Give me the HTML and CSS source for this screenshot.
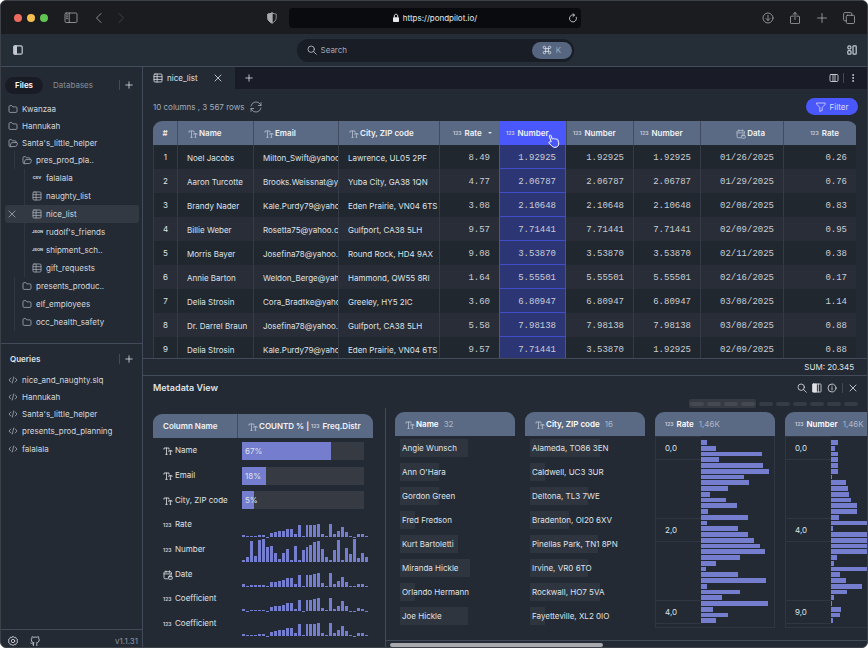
FILE: index.html
```html
<!DOCTYPE html>
<html lang="en">
<head>
  <meta charset="UTF-8" />
  <meta name="viewport" content="width=device-width, initial-scale=1" />
  <title>PondPilot</title>
  <link rel="stylesheet" href="styles.css">
</head>
<body>
  <svg class="sprite" aria-hidden="true">
    <symbol id="i-folder" viewBox="0 0 10 10"><path d="M1 2.600c0-.6.4-1 1-1h1.800l1.100 1.300H8c.6 0 1 .4 1 1v3.500c0 .6-.4 1-1 1H2c-.6 0-1-.4-1-1z"/></symbol>
    <symbol id="i-folder-open" viewBox="0 0 10 10"><path d="M2 8.400c-.6 0-1-.4-1-1V2.600c0-.6.4-1 1-1h1.500l1 1.200h2.600c.6 0 1 .4 1 1v.7M2 8.400l1.200-3.300c.1-.3.3-.5.7-.5h4.900c.4 0 .7.3.6.7l-.7 2.400c-.1.4-.5.7-.9.7z"/></symbol>
    <symbol id="i-table" viewBox="0 0 10 10"><rect x="1" y="1" width="8" height="8" rx="1"/><path d="M1 3.700h8M1 6.400h8M4.100 1v8"/></symbol>
    <symbol id="i-close" viewBox="0 0 10 10"><path d="M2 2l6 6M8 2l-6 6"/></symbol>
    <symbol id="i-plus" viewBox="0 0 10 10"><path d="M5 1.800v6.400M1.800 5h6.400"/></symbol>
    <symbol id="i-code" viewBox="0 0 10 10"><path d="M2.800 3L1 5l1.800 2M7.200 3L9 5 7.200 7M5.700 2L4.300 8"/></symbol>
    <symbol id="i-search" viewBox="0 0 10 10"><circle cx="4.200" cy="4.200" r="3.200"/><path d="M6.600 6.600L9.300 9.300"/></symbol>
    <symbol id="i-text" viewBox="0 0 10 10"><path d="M1 3.200V2h5v1.200M3.500 2v6.300M2.700 8.300h1.600M5.800 5.500v-.8H9v.8M7.400 4.700v3.600M6.900 8.300h1"/></symbol>
    <symbol id="i-date" viewBox="0 0 10 10"><path d="M4.600 8.800H2c-.6 0-1-.4-1-1V2.700c0-.6.4-1 1-1h5.400c.6 0 1 .4 1 1v1.500M1 3.900h7.400M3 .8v1.600M6.400.8v1.600"/><rect x="5.600" y="6.600" width="3.600" height="2.600" rx=".4"/><path d="M6.400 6.600v-.7c0-1.200 2-1.200 2 0v.7"/></symbol>
    <symbol id="i-columns" viewBox="0 0 10 10"><rect x="1" y="1.500" width="8" height="7" rx="1"/><path d="M4 1.500v7M6 1.500v7"/></symbol>
  </svg>

  <div class="window">
    <header class="chrome">
      <div class="chrome-side">
        <span class="dot red"></span><span class="dot yellow"></span><span class="dot green"></span>
        <button class="icon-btn chrome-panel" aria-label="Sidebar"><svg class="icon wide" viewBox="0 0 14 12"><rect x="1" y="1" width="12" height="9.500" rx="1.200"/><path d="M5.200 1v9.500M2.400 3h1.400M2.400 4.800h1.400M2.400 6.600h1.400"/></svg></button>
        <button class="icon-btn chrome-back" aria-label="Back"><svg class="icon lg" viewBox="0 0 12 12"><path d="M8 1.500L3.500 6 8 10.500"/></svg></button>
        <button class="icon-btn chrome-forward" aria-label="Forward"><svg class="icon lg" viewBox="0 0 12 12"><path d="M4 1.500L8.500 6 4 10.500"/></svg></button>
        <svg class="icon lg shield" viewBox="0 0 12 12"><path d="M6 1C4.500 1.700 3 2 1.800 2v4.200c0 2.200 2 3.900 4.200 4.900 2.200-1 4.200-2.700 4.200-4.900V2C9 2 7.500 1.700 6 1z"/><path class="fill" d="M6 1C4.500 1.700 3 2 1.800 2v4.200c0 2.200 2 3.900 4.200 4.900z"/></svg>
      </div>
      <div class="address">
        <svg class="lock" viewBox="0 0 8 10"><rect x="1" y="4.300" width="6" height="4.700" rx=".8"/><path d="M2.300 4.500V3c0-2.300 3.400-2.300 3.400 0v1.500"/></svg>
        <span>https://pondpilot.io/</span>
        <button class="icon-btn reload" aria-label="Reload"><svg class="icon" viewBox="0 0 10 10"><path d="M8.300 4.200a3.500 3.500 0 1 1-1.900-2L5.200.7M6.500 2.200L5 3.500"/></svg></button>
      </div>
      <div class="chrome-side chrome-tools">
        <button class="icon-btn" aria-label="Downloads"><svg class="icon lg" viewBox="0 0 12 12"><circle cx="6" cy="6" r="5"/><path d="M6 3.300v5M4 6.500l2 2 2-2"/></svg></button>
        <button class="icon-btn" aria-label="Share"><svg class="icon lg" viewBox="0 0 12 12"><path d="M4.300 4.200H2.200c-.4 0-.7.3-.7.7v6c0 .4.3.7.7.7h7.600c.4 0 .7-.3.7-.7v-6c0-.4-.3-.7-.7-.7H7.700M6 7.600V.5M3.900 2.500L6 .5l2.100 2"/></svg></button>
        <button class="icon-btn" aria-label="New tab"><svg class="icon lg" viewBox="0 0 12 12"><path d="M6 1.500v9M1.500 6h9"/></svg></button>
        <button class="icon-btn" aria-label="Tabs"><svg class="icon lg" viewBox="0 0 12 12"><rect x="3.300" y="3.300" width="8.200" height="8.200" rx="1.200"/><path d="M3.300 8.800H1.700c-.6 0-1.100-.5-1.100-1.100v-6c0-.6.5-1.100 1.100-1.100h6c.6 0 1.100.5 1.100 1.100v1.600"/></svg></button>
      </div>
    </header>

    <div class="app-bar">
      <button class="icon-btn" aria-label="Toggle sidebar"><svg class="icon bold" viewBox="0 0 10 10"><rect x=".8" y=".8" width="8.400" height="8.400" rx="1.200"/><path class="fill" d="M1.200 1.200h2.200v7.600H1.200z"/></svg></button>
      <div class="search">
        <svg class="icon"><use href="#i-search"/></svg>
        <input type="search" placeholder="Search" aria-label="Search">
        <kbd><svg class="icon" viewBox="0 0 10 10"><path d="M3.600 3.600H2.400a1.200 1.200 0 1 1 1.200-1.200v5.200a1.200 1.200 0 1 1-1.200-1.200h5.200a1.200 1.200 0 1 1-1.200 1.200V2.400a1.200 1.200 0 1 1 1.200 1.200z"/></svg> K</kbd>
      </div>
      <button class="icon-btn" aria-label="Layout"><svg class="icon bold" viewBox="0 0 10 10"><circle cx="2.400" cy="2.400" r="1.600"/><rect x=".8" y="5.600" width="3.200" height="3.600" rx="1"/><rect x="6" y=".8" width="3.200" height="8.400" rx=".8"/></svg></button>
    </div>

    <div class="body">
      <aside class="sidebar">
        <section class="files">
          <div class="side-head">
            <button class="pill active">Files</button>
            <button class="pill">Databases</button>
            <span class="sep"></span>
            <button class="icon-btn" aria-label="Add file"><svg class="icon"><use href="#i-plus"/></svg></button>
          </div>
          <ul class="tree">
            <li class="l0"><svg class="icon"><use href="#i-folder"/></svg>Kwanzaa</li>
            <li class="l0"><svg class="icon"><use href="#i-folder"/></svg>Hannukah</li>
            <li class="l0"><svg class="icon"><use href="#i-folder-open"/></svg>Santa's_little_helper</li>
            <li class="l1"><svg class="icon"><use href="#i-folder-open"/></svg>pres_prod_pla..</li>
            <li class="l2"><span class="badge">CSV</span>falalala</li>
            <li class="l2"><svg class="icon"><use href="#i-table"/></svg>naughty_list</li>
            <li class="l2 selected"><button class="icon-btn close" aria-label="Close nice_list"><svg class="icon"><use href="#i-close"/></svg></button><svg class="icon"><use href="#i-table"/></svg>nice_list</li>
            <li class="l2"><span class="badge">JSON</span>rudolf's_friends</li>
            <li class="l2"><span class="badge">JSON</span>shipment_sch..</li>
            <li class="l2"><svg class="icon"><use href="#i-table"/></svg>gift_requests</li>
            <li class="l1"><svg class="icon"><use href="#i-folder"/></svg>presents_produc..</li>
            <li class="l1"><svg class="icon"><use href="#i-folder"/></svg>elf_employees</li>
            <li class="l1"><svg class="icon"><use href="#i-folder"/></svg>occ_health_safety</li>
          </ul>
        </section>
        <section class="queries">
          <div class="side-head">
            <h2>Queries</h2>
            <span class="sep"></span>
            <button class="icon-btn" aria-label="Add query"><svg class="icon"><use href="#i-plus"/></svg></button>
          </div>
          <ul class="tree">
            <li class="l0"><svg class="icon"><use href="#i-code"/></svg>nice_and_naughty.slq</li>
            <li class="l0"><svg class="icon"><use href="#i-code"/></svg>Hannukah</li>
            <li class="l0"><svg class="icon"><use href="#i-code"/></svg>Santa's_little_helper</li>
            <li><svg class="icon"><use href="#i-code"/></svg>presents_prod_planning</li>
            <li><svg class="icon"><use href="#i-code"/></svg>falalala</li>
          </ul>
        </section>
        <footer class="side-foot">
          <button class="icon-btn" aria-label="Settings"><svg class="icon" viewBox="0 0 10 10"><path d="M5 .5l1.200.9 1.500-.1.500 1.400 1.300.8-.4 1.500.4 1.500-1.300.8-.5 1.400-1.500-.1L5 9.500l-1.200-.9-1.500.1-.5-1.400L.5 6.500.9 5 .5 3.500l1.300-.8.5-1.400 1.500.1z"/><circle cx="5" cy="5" r="1.700"/></svg></button>
          <button class="icon-btn" aria-label="GitHub"><svg class="icon" viewBox="0 0 10 10"><path d="M3.400 9.600V7.800C1.800 8.200 1.900 7 .8 6.900M6.800 9.600V7.700c0-.5-.1-.8-.3-1C8 6.500 9.200 5.800 9.200 3.800c0-.6-.2-1.100-.6-1.500.2-.5.1-1.100-.1-1.600 0 0-.6-.1-1.700.6a6 6 0 0 0-3.100 0C2.600.6 2 .7 2 .7c-.2.5-.2 1.100-.1 1.600-.4.4-.6.900-.6 1.500 0 2 1.200 2.700 2.700 2.900-.3.300-.5.700-.5 1.100"/></svg></button>
          <span class="version">v1.1.31</span>
        </footer>
      </aside>

      <main class="content">
        <nav class="tabs">
          <div class="tab">
            <svg class="icon"><use href="#i-table"/></svg>
            <span>nice_list</span>
            <button class="icon-btn" aria-label="Close tab"><svg class="icon"><use href="#i-close"/></svg></button>
          </div>
          <button class="icon-btn add-tab" aria-label="New tab"><svg class="icon"><use href="#i-plus"/></svg></button>
          <div class="tab-tools">
            <button class="icon-btn" aria-label="Columns"><svg class="icon"><use href="#i-columns"/></svg></button>
            <span class="sep"></span>
            <button class="icon-btn" aria-label="More"><svg class="icon" viewBox="0 0 10 10"><circle class="fill" cx="5" cy="2" r=".4"/><circle class="fill" cx="5" cy="5" r=".4"/><circle class="fill" cx="5" cy="8" r=".4"/></svg></button>
          </div>
        </nav>

        <div class="toolbar">
          <span>10 columns , 3 567 rows</span>
          <button class="icon-btn" aria-label="Refresh"><svg class="icon lg" viewBox="0 0 12 12"><path d="M1 5a5.100 5.100 0 0 1 9.300-1.700L11 4.500M11 1.700v2.800H8.300M11 7a5.100 5.100 0 0 1-9.300 1.700L1 7.500M1 10.300V7.500h2.700"/></svg></button>
          <button class="filter"><svg class="icon" viewBox="0 0 10 10"><path d="M.8 1h8.400v1.300L6.200 5.500v3L3.800 9.400V5.500L.8 2.300z"/></svg>Filter</button>
        </div>

        <div class="grid-scroll">
          <table class="grid">
            <colgroup>
              <col class="w-idx"><col class="w-name"><col class="w-email"><col class="w-city"><col class="w-rate">
              <col class="w-num"><col class="w-num"><col class="w-num"><col class="w-date"><col class="w-last">
            </colgroup>
            <thead>
              <tr>
                <th class="idx">#</th>
                <th><svg class="icon"><use href="#i-text"/></svg>Name</th>
                <th><svg class="icon"><use href="#i-text"/></svg>Email</th>
                <th><svg class="icon"><use href="#i-text"/></svg>City, ZIP code</th>
                <th class="rate"><span class="n">123</span>Rate<span class="sort"></span></th>
                <th class="num picked"><span class="n">123</span>Number
                  <svg class="pointer" viewBox="0 0 12 14"><path d="M3.200 7.800L1.300 2.200c-.3-1.100 1.300-1.700 1.700-.6l1.300 3.600c.5-.9 1.600-.8 1.900 0 .5-.7 1.600-.6 1.900.2.600-.6 1.600-.3 1.700.5l.8 2.600c.5 2.200-.4 4.200-2.500 4.700-1.800.5-3.300-.1-4.300-1.300L1 9.200c-.6-.9.5-1.900 1.300-1.300z"/></svg>
                </th>
                <th class="num"><span class="n">123</span>Number</th>
                <th class="num"><span class="n">123</span>Number</th>
                <th class="right"><svg class="icon"><use href="#i-date"/></svg>Data</th>
                <th class="right"><span class="n">123</span>Rate</th>
              </tr>
            </thead>
            <tbody id="rows"></tbody>
          </table>
        </div>
        <div class="sum">SUM: 20.345</div>

        <section class="meta">
          <div class="meta-head">
            <h2>Metadata View</h2>
            <button class="icon-btn" aria-label="Search columns"><svg class="icon"><use href="#i-search"/></svg></button>
            <button class="icon-btn" aria-label="Layout"><svg class="icon" viewBox="0 0 10 10"><rect x="1" y="1" width="8" height="8" rx=".6"/><path class="fill" d="M1 1h3.600v8H1z"/><path d="M6.400 1v8"/></svg></button>
            <button class="icon-btn" aria-label="Info"><svg class="icon" viewBox="0 0 10 10"><circle cx="5" cy="5" r="4"/><path d="M5 4.500v2.500M5 2.800v.3"/></svg></button>
            <span class="sep"></span>
            <button class="icon-btn" aria-label="Close metadata"><svg class="icon"><use href="#i-close"/></svg></button>
          </div>
          <div class="minimap"><div class="minimap-view"><i></i><i></i><i></i><i></i></div><i></i><i></i><i></i><i></i><i></i><i></i></div>

          <div class="meta-body">
            <div class="summary-pane">
              <table class="summary">
                <thead>
                  <tr>
                    <th>Column Name</th>
                    <th><svg class="icon"><use href="#i-text"/></svg>COUNTD % | <span class="n">123</span>Freq.Distr</th>
                  </tr>
                </thead>
                <tbody id="summary"></tbody>
              </table>
            </div>
            <div class="cards-pane">
              <div class="cards">
                <section class="card">
                  <h3><svg class="icon"><use href="#i-text"/></svg>Name <small>32</small></h3>
                  <ul class="values" id="names"></ul>
                </section>
                <section class="card">
                  <h3><svg class="icon"><use href="#i-text"/></svg>City, ZIP code <small>16</small></h3>
                  <ul class="values" id="cities"></ul>
                </section>
                <section class="card">
                  <h3><span class="n">123</span>Rate <small>1,46K</small></h3>
                  <div class="histo">
                    <div class="scale"><span>0,0</span><span>2,0</span><span>4,0</span></div>
                    <div class="bars" id="rate-bars"></div>
                  </div>
                </section>
                <section class="card">
                  <h3><span class="n">123</span>Number <small>1,46K</small></h3>
                  <div class="histo">
                    <div class="scale"><span>0,0</span><span>4,0</span><span>9,0</span></div>
                    <div class="bars" id="number-bars"></div>
                  </div>
                </section>
              </div>
              <div class="scrollbar"><span></span></div>
            </div>
          </div>
        </section>
      </main>
    </div>
  </div>
  <script src="script.js"></script>
</body>
</html>
```
FILE: styles.css
```css
* {
  box-sizing: border-box;
}

body {
  margin: 0;
  height: 100vh;
  overflow: hidden;
  background: #fff;
  color: #dfe2e7;
  font-family: Inter, 'Liberation Sans', sans-serif;
  font-size: 8px;
  line-height: 12px;
}

ul, h2, h3 {
  margin: 0;
  padding: 0;
  list-style: none;
}

button, input {
  font: inherit;
  color: inherit;
  border: 0;
  padding: 0;
  background: none;
}

.sprite {
  position: absolute;
  width: 0;
  height: 0;
}

.icon {
  width: 10px;
  height: 10px;
  flex: none;
  fill: none;
  stroke: currentColor;
  stroke-width: 0.8;
  stroke-linecap: round;
  stroke-linejoin: round;
}

.icon .fill {
  fill: currentColor;
}

.icon.lg {
  width: 12px;
  height: 12px;
}

.icon.wide {
  width: 14px;
  height: 12px;
}

.icon.bold {
  stroke-width: 1.2;
}

.icon-btn {
  display: flex;
  cursor: pointer;
}

.sep {
  width: 1px;
  height: 10px;
  background: #424a56;
}

.n {
  font-size: 5px;
  font-weight: 700;
  color: #c3c8d2;
}

.window {
  display: flex;
  flex-direction: column;
  height: 100vh;
  border: 1px solid #3c4148;
  border-radius: 6px;
  background: #232a34;
  overflow: hidden;
}

/* browser bar */
.chrome {
  display: flex;
  align-items: center;
  flex: none;
  height: 33px;
  padding: 0 12px 0 13px;
  background: #1b1c1f;
  color: #a9abaf;
}

.chrome-side {
  display: flex;
  flex: 1;
  align-items: center;
}

.dot {
  width: 8px;
  height: 8px;
  margin-right: 5px;
  border-radius: 50%;
}

.red { background: #ed6a5e; }
.yellow { background: #f4bf4f; }
.green { background: #61c554; }

.chrome-panel {
  margin-left: 11px;
}

.chrome-back {
  margin-left: 15px;
}

.chrome-forward {
  margin-left: 10px;
  color: #4c4e52;
}

.shield {
  margin: 0 11px 0 auto;
}

.chrome-tools {
  justify-content: flex-end;
  gap: 15px;
}

.address {
  display: flex;
  flex: 0 1 292px;
  align-items: center;
  justify-content: center;
  position: relative;
  height: 20px;
  border-radius: 4px;
  background: #090b0e;
  color: #e8e9eb;
}

.lock {
  width: 8px;
  height: 10px;
  margin-right: 3px;
  fill: currentColor;
}

.lock path {
  fill: none;
  stroke: currentColor;
}

.reload {
  position: absolute;
  right: 3px;
}

/* app bar */
.app-bar {
  display: flex;
  align-items: center;
  justify-content: space-between;
  flex: none;
  height: 33px;
  padding: 0 10px 0 12px;
  border-bottom: 1px solid #414e5d;
  background: #252d37;
  color: #c3cbd6;
}

.search {
  display: flex;
  align-items: center;
  gap: 4px;
  width: 277px;
  height: 23px;
  padding: 0 2px 0 10px;
  border-radius: 12px;
  background: #191d26;
}

.search input {
  flex: 1;
  min-width: 0;
  outline: none;
}

.search input::placeholder {
  color: #a3a9b3;
}

.search kbd {
  display: flex;
  align-items: center;
  justify-content: center;
  gap: 4px;
  width: 40px;
  height: 17px;
  border-radius: 9px;
  background: #576680;
  color: #9ca8bb;
  font-family: inherit;
}

.search kbd .icon {
  color: #dfe4ec;
}

.body {
  display: flex;
  flex: 1;
  min-height: 0;
}

/* sidebar */
.sidebar {
  display: flex;
  flex-direction: column;
  flex: none;
  width: 142px;
  border-right: 1px solid #414b59;
}

.files {
  height: 277px;
  padding-top: 9px;
  border-bottom: 1px solid #414b59;
}

.side-head {
  display: flex;
  align-items: center;
  height: 18px;
  padding: 0 8px 0 4px;
}

.side-head h2 {
  padding-left: 5px;
  font-size: 8px;
  font-weight: 600;
}

.side-head .sep {
  margin: 0 4px 0 auto;
}

.pill {
  height: 17px;
  padding: 0 10px;
  border-radius: 9px;
  color: #858d99;
}

.pill.active {
  background: #191c24;
  color: #fff;
  font-weight: 600;
}

.tree {
  padding: 6px 3px 0 4px;
}

.tree li {
  display: flex;
  align-items: center;
  gap: 4px;
  height: 18px;
  border-radius: 3px;
  padding-left: 3px;
  color: #d3d7dd;
}

.tree .icon {
  color: #a4abb5;
}

.tree .l0 {
  height: 17px;
}

.l1::before,
.l2::before {
  content: '';
  align-self: stretch;
  width: 1px;
  margin-left: 6px;
  margin-right: 3px;
  background: #2f3640;
}

.tree .l2::before {
  margin-left: 16px;
  margin-right: 3px;
}

.tree .selected {
  background: #333942;
}

.tree .selected::before {
  display: none;
}

.selected .close {
  margin-left: -1px;
  margin-right: 11px;
}

.badge {
  width: 10px;
  font-size: 4px;
  font-weight: 800;
  text-align: center;
  color: #c3c8d0;
}

.queries {
  flex: 1;
  padding-top: 6px;
}

.queries .tree {
  padding-top: 3px;
}

.side-foot {
  display: flex;
  align-items: center;
  gap: 12px;
  height: 18px;
  padding: 4px 4px 0 7px;
  border-top: 1px solid #414b59;
}

.version {
  margin-left: auto;
  color: #8d95a1;
}

/* content */
.content {
  display: flex;
  flex-direction: column;
  flex: 1;
  min-width: 0;
}

.tabs {
  display: flex;
  align-items: center;
  flex: none;
  height: 22px;
  background: #191c26;
}

.tab {
  display: flex;
  align-items: center;
  gap: 4px;
  width: 92px;
  height: 22px;
  padding: 0 12px 0 10px;
  background: #232a34;
}

.tab .icon-btn {
  margin-left: auto;
}

.add-tab {
  margin-left: 9px;
}

.tab-tools {
  display: flex;
  align-items: center;
  gap: 4px;
  margin-left: auto;
  padding-right: 9px;
}

.toolbar {
  display: flex;
  align-items: center;
  gap: 6px;
  flex: none;
  height: 32px;
  padding: 3px 9px 0 10px;
  color: #a6acb6;
}

.filter {
  display: flex;
  align-items: center;
  justify-content: center;
  gap: 4px;
  width: 52px;
  height: 17px;
  margin-left: auto;
  border-radius: 9px;
  background: #4a58fb;
  color: #d9dcff;
}

.grid-scroll {
  flex: 1;
  min-height: 0;
  margin: 0 11px 0 10px;
  overflow: hidden;
}

table {
  width: 100%;
  border-collapse: separate;
  border-spacing: 0;
}

.grid {
  table-layout: fixed;
}

.w-idx { width: 24px; }
.w-name { width: 76px; }
.w-email { width: 85px; }
.w-city { width: 101px; }
.w-rate { width: 60px; }
.w-num { width: 67px; }
.w-date { width: 83px; }
.w-last { width: 74px; }

th {
  height: 24px;
  padding: 0 10px;
  background: #5a6a85;
  color: #f0f2f5;
  font-weight: 600;
  text-align: left;
  white-space: nowrap;
}

th .icon,
h3 .icon {
  color: #b9c2d0;
  margin-right: 1px;
  vertical-align: middle;
}

th .n,
h3 .n {
  margin-right: 3px;
  vertical-align: 1px;
}

th + th {
  border-left: 1px solid #414c5e;
}

th:first-child {
  border-top-left-radius: 9px;
}

th:last-child {
  border-top-right-radius: 9px;
}

.grid td {
  height: 24px;
  padding: 1px 0 0 9px;
  border-left: 1px solid #343b46;
  background: #20272f;
  overflow: hidden;
  white-space: nowrap;
}

.grid td:last-child {
  border-right: 1px solid #343b46;
}

.grid tr:nth-child(even) td {
  background: #282d37;
}

.grid .idx {
  padding: 0;
  text-align: center;
}

.grid td.mono {
  padding: 1px 9px 0 0;
  font-family: 'Liberation Mono', monospace;
  font-size: 9px;
  text-align: right;
  color: #c9cdd4;
}

.grid th.num {
  padding: 0 0 0 6px;
}

.grid th.rate {
  padding-left: 13px;
}

.grid th.right {
  padding-right: 18px;
  text-align: right;
}

.sort {
  display: inline-block;
  margin-left: 6px;
  border: 2px solid transparent;
  border-top-color: #dfe3ea;
  border-bottom: 0;
  vertical-align: 2px;
}

.grid th.picked {
  position: relative;
  border-left-color: #4a58fb;
  background: #4a58fb;
}

.grid tr td.picked {
  padding-top: 2px;
  border: 1px solid #424dc8;
  border-top: 0;
  background: #2d3674;
}

.grid tr td.picked + td {
  border-left: 0;
}

.pointer {
  position: absolute;
  left: 48px;
  top: 13px;
  z-index: 1;
  width: 12px;
  height: 14px;
  fill: #4a58fb;
  stroke: #fff;
}

.sum {
  flex: none;
  height: 17px;
  padding: 2px 13px 0 0;
  border-top: 1px solid #414b59;
  text-align: right;
}

/* metadata */
.meta {
  flex: none;
  border-top: 1px solid #414b59;
}

.meta-head {
  display: flex;
  align-items: center;
  gap: 5px;
  height: 23px;
  padding: 0 9px 0 10px;
}

.meta-head h2 {
  flex: 1;
  font-size: 9px;
  font-weight: 600;
}

.minimap {
  display: flex;
  align-items: center;
  justify-content: flex-end;
  gap: 3px;
  height: 9px;
  padding-right: 9px;
}

.minimap-view {
  display: flex;
  align-items: center;
  gap: 3px;
  height: 9px;
  padding: 0 1px;
  border-radius: 2px;
  background: #363b43;
}

.minimap i {
  width: 14px;
  height: 4px;
  border-radius: 2px;
  background: #363c45;
}

.minimap .minimap-view i {
  background: #444952;
}

.meta-body {
  display: flex;
}

.summary-pane {
  flex: none;
  width: 243px;
  padding: 6px 12px 11px 10px;
  border-right: 1px solid #414b59;
}

.summary {
  height: 100%;
}

.summary th:first-child {
  width: 84px;
}

.summary th + th {
  padding-right: 0;
}

.summary td {
  height: 24px;
  padding: 0 0 0 10px;
  white-space: nowrap;
}

.summary td .icon,
.summary td .n {
  width: 10px;
  margin-right: 2px;
  vertical-align: middle;
}

.summary td .n {
  display: inline-block;
}

.summary td + td {
  padding: 0 5px;
  vertical-align: bottom;
}

.meter {
  height: 18px;
  margin: 0 4px 3px 0;
  background: #353a43;
}

.meter span {
  display: block;
  height: 18px;
  padding-left: 3px;
  background: #757dcf;
  line-height: 18px;
}

.freq {
  display: flex;
  align-items: flex-end;
  gap: 1px;
  height: 23px;
}

.freq i {
  flex: 1;
  background: #757dcf;
}

.cards-pane {
  flex: 1;
  min-width: 0;
}

.cards {
  display: flex;
  gap: 10px;
  padding: 4px 0 12px 9px;
  border-bottom: 1px solid #414b59;
  overflow: hidden;
}

.card {
  flex: none;
  width: 120px;
}

.card h3 {
  height: 24px;
  padding-left: 10px;
  border-radius: 9px 9px 0 0;
  background: #5a6a85;
  color: #fff;
  font-size: 8px;
  font-weight: 600;
  line-height: 24px;
}

.card small {
  margin-left: 3px;
  color: #abb6c8;
  font-size: 8px;
  font-weight: 400;
}

.values li {
  height: 24px;
  padding: 3px 5px;
}

.values span {
  display: block;
  height: 18px;
  padding-left: 2px;
  background: #2f353f;
  line-height: 18px;
  white-space: nowrap;
}

.histo {
  display: flex;
  height: 192px;
  border: 1px solid #2f3641;
  border-top: 0;
}

.scale {
  display: flex;
  flex-direction: column;
  gap: 58px;
  width: 45px;
}

.scale span {
  height: 24px;
  padding-left: 9px;
  border: solid #2f3641;
  border-width: 1px 0;
  line-height: 22px;
}

.bars {
  display: flex;
  flex-direction: column;
  flex: 1;
  gap: 1px;
  padding: 4px 0;
  overflow: hidden;
}

.bars i {
  flex: 1;
  background: #757dcf;
}

.scrollbar {
  padding: 2px 4px 0;
}

.scrollbar span {
  display: block;
  width: 45%;
  height: 4px;
  border-radius: 2px;
  background: #a7a9ad;
}
```
FILE: script.js
```js
const people = [
  ['Noel Jacobs', 'Milton_Swift@yahoo.com', 'Lawrence, UL05 2PF', '8.49', '1.92925', '01/26/2025', '0.26'],
  ['Aaron Turcotte', 'Brooks.Weissnat@yahoo.com', 'Yuba City, GA38 1QN', '4.77', '2.06787', '01/29/2025', '0.76'],
  ['Brandy Nader', 'Kale.Purdy79@yahoo.com', 'Eden Prairie, VN04 6TS', '3.08', '2.10648', '02/08/2025', '0.83'],
  ['Billie Weber', 'Rosetta75@yahoo.com', 'Gulfport, CA38 5LH', '9.57', '7.71441', '02/09/2025', '0.95'],
  ['Morris Bayer', 'Josefina78@yahoo.com', 'Round Rock, HD4 9AX', '9.08', '3.53870', '02/11/2025', '0.38'],
  ['Annie Barton', 'Weldon_Berge@yahoo.com', 'Hammond, QW55 8RI', '1.64', '5.55501', '02/16/2025', '0.17'],
  ['Delia Strosin', 'Cora_Bradtke@yahoo.com', 'Greeley, HY5 2IC', '3.60', '6.80947', '03/08/2025', '1.14'],
  ['Dr. Darrel Braun', 'Josefina78@yahoo.com', 'Gulfport, CA38 5LH', '5.58', '7.98138', '03/08/2025', '0.88'],
  ['Delia Strosin', 'Kale.Purdy79@yahoo.com', 'Eden Prairie, VN04 6TS', '9.57', '7.71441', '02/09/2025', '0.88']
];

document.getElementById('rows').innerHTML = people.map(([name, email, city, rate, num, date, last], i) => {
  // the last visible row has its own values in the two plain number columns
  const second = i === 8 ? '3.53870' : num;
  const third = i === 8 ? '1.92925' : num;
  return `<tr>
    <td class="idx">${i + 1}</td><td>${name}</td><td>${email}</td><td>${city}</td>
    <td class="mono">${rate}</td><td class="mono picked">${num}</td>
    <td class="mono">${second}</td><td class="mono">${third}</td>
    <td class="mono">${date}</td><td class="mono">${last}</td>
  </tr>`;
}).join('');

const rateFreq = [9, 3, 6, 6, 7, 7, 1, 19, 21, 24, 28, 37, 37, 12, 51, 3, 51, 51, 54, 57, 15, 4, 57, 12, 24, 43, 21, 3, 1, 13, 12, 3];
const numberFreq = [6, 21, 89, 27, 93, 100, 64, 70, 39, 12, 36, 54, 9, 70, 9, 51, 66, 75, 84, 89, 57, 22, 7, 51, 95, 7, 60, 33, 100, 18, 40, 21];

const text = '<svg class="icon"><use href="#i-text"/></svg>';
const date = '<svg class="icon"><use href="#i-date"/></svg>';
const number = '<span class="n">123</span>';

const meter = (pct, width) => `<div class="meter"><span style="width: ${width}%">${pct}%</span></div>`;
const freq = list => `<div class="freq">${list.map(v => `<i style="height: ${v}%"></i>`).join('')}</div>`;

document.getElementById('summary').innerHTML = [
  [text + 'Name', meter(67, 73)],
  [text + 'Email', meter(18, 20)],
  [text + 'City, ZIP code', meter(5, 10)],
  [number + 'Rate', freq(rateFreq)],
  [number + 'Number', freq(numberFreq)],
  [date + 'Date', freq(rateFreq)],
  [number + 'Coefficient', freq(rateFreq)],
  [number + 'Coefficient', freq(rateFreq)]
].map(([label, chart]) => `<tr><td>${label}</td><td>${chart}</td></tr>`).join('');

function renderValues(id, items) {
  document.getElementById(id).innerHTML = items
    .map(([label, share]) => `<li><span style="width: ${share}%">${label}</span></li>`)
    .join('');
}

renderValues('names', [
  ['Angie Wunsch', 62], ['Ann O\'Hara', 35], ['Gordon Green', 35], ['Fred Fredson', 14],
  ['Kurt Bartoletti', 53], ['Miranda Hickle', 64], ['Orlando Hermann', 14], ['Joe Hickle', 62]
]);
renderValues('cities', [
  ['Alameda, TO86 3EN', 64], ['Caldwell, UC3 3UR', 14], ['Deltona, TL3 7WE', 53], ['Bradenton, OI20 6XV', 35],
  ['Pinellas Park, TN1 8PN', 62], ['Irvine, VR0 6TO', 53], ['Rockwall, HO7 5VA', 64], ['Fayetteville, XL2 0IO', 14]
]);

function renderBars(id, list) {
  document.getElementById(id).innerHTML = list.map(v => `<i style="width: ${v}%"></i>`).join('');
}

renderBars('rate-bars', [8, 20, 84, 25, 85, 93, 59, 66, 37, 13, 34, 49, 10, 65, 8, 50, 64, 73, 81, 88, 54, 21, 7, 50, 89, 8, 54, 29, 92, 17, 37, 20]);
renderBars('number-bars', [9, 5, 9, 9, 10, 10, 2, 20, 23, 24, 28, 36, 36, 11, 80, 3, 90, 90, 90, 90, 8, 4, 90, 12, 20, 42, 22, 4, 2, 14, 12, 3]);
```
